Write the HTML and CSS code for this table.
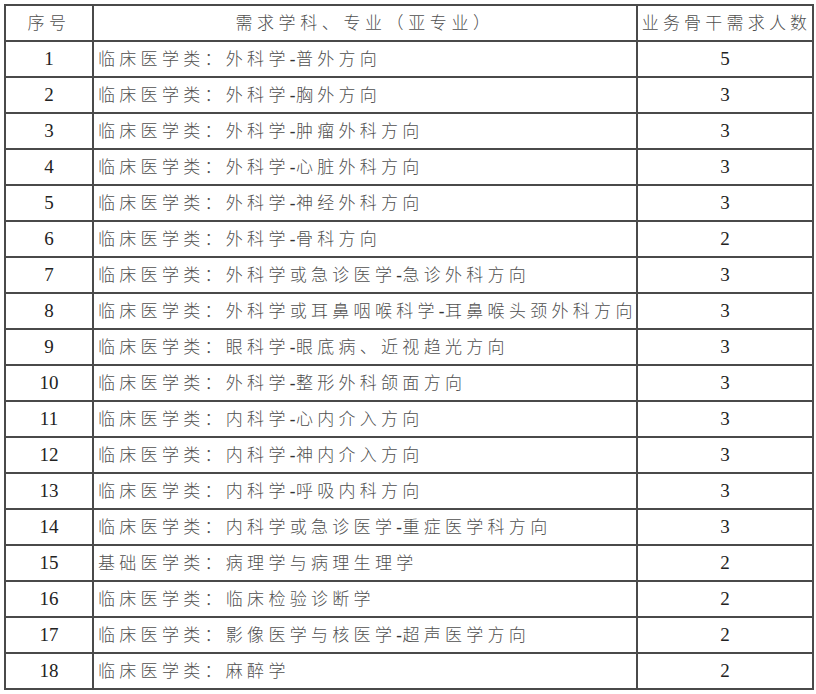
FILE: index.html
```html
<!DOCTYPE html>
<html lang="zh-CN">
<head>
<meta charset="utf-8">
<title>需求表</title>
<link rel="stylesheet" href="styles.css">
</head>
<body>
<table class="req">
<colgroup><col class="c1"><col class="c2"><col class="c3"></colgroup>
<thead>
<tr><th>序号</th><th>需求学科、专业（亚专业）</th><th class="last">业务骨干需求人数</th></tr>
</thead>
<tbody>
<tr><td class="num">1</td><td class="txt">临床医学类：外科学<span class="h">-</span>普外方向</td><td class="num">5</td></tr>
<tr><td class="num">2</td><td class="txt">临床医学类：外科学<span class="h">-</span>胸外方向</td><td class="num">3</td></tr>
<tr><td class="num">3</td><td class="txt">临床医学类：外科学<span class="h">-</span>肿瘤外科方向</td><td class="num">3</td></tr>
<tr><td class="num">4</td><td class="txt">临床医学类：外科学<span class="h">-</span>心脏外科方向</td><td class="num">3</td></tr>
<tr><td class="num">5</td><td class="txt">临床医学类：外科学<span class="h">-</span>神经外科方向</td><td class="num">3</td></tr>
<tr><td class="num">6</td><td class="txt">临床医学类：外科学<span class="h">-</span>骨科方向</td><td class="num">2</td></tr>
<tr><td class="num">7</td><td class="txt">临床医学类：外科学或急诊医学<span class="h">-</span>急诊外科方向</td><td class="num">3</td></tr>
<tr><td class="num">8</td><td class="txt">临床医学类：外科学或耳鼻咽喉科学<span class="h">-</span>耳鼻喉头颈外科方向</td><td class="num">3</td></tr>
<tr><td class="num">9</td><td class="txt">临床医学类：眼科学<span class="h">-</span>眼底病、近视趋光方向</td><td class="num">3</td></tr>
<tr><td class="num">10</td><td class="txt">临床医学类：外科学<span class="h">-</span>整形外科颌面方向</td><td class="num">3</td></tr>
<tr><td class="num">11</td><td class="txt">临床医学类：内科学<span class="h">-</span>心内介入方向</td><td class="num">3</td></tr>
<tr><td class="num">12</td><td class="txt">临床医学类：内科学<span class="h">-</span>神内介入方向</td><td class="num">3</td></tr>
<tr><td class="num">13</td><td class="txt">临床医学类：内科学<span class="h">-</span>呼吸内科方向</td><td class="num">3</td></tr>
<tr><td class="num">14</td><td class="txt">临床医学类：内科学或急诊医学<span class="h">-</span>重症医学科方向</td><td class="num">3</td></tr>
<tr><td class="num">15</td><td class="txt">基础医学类：病理学与病理生理学</td><td class="num">2</td></tr>
<tr><td class="num">16</td><td class="txt">临床医学类：临床检验诊断学</td><td class="num">2</td></tr>
<tr><td class="num">17</td><td class="txt">临床医学类：影像医学与核医学<span class="h">-</span>超声医学方向</td><td class="num">2</td></tr>
<tr><td class="num">18</td><td class="txt">临床医学类：麻醉学</td><td class="num">2</td></tr>
</tbody>
</table>
</body>
</html>
```

FILE: styles.css
```css
html, body {
  margin: 0;
  padding: 0;
  background: #ffffff;
}
body {
  padding: 4px;
}
.req {
  border-collapse: collapse;
  table-layout: fixed;
  width: 808px;
  font-family: "Liberation Serif", "Noto Sans CJK SC", serif;
  color: #333;
}
.c1 { width: 88px; }
.c2 { width: 544px; }
.c3 { width: 176px; }
.req th, .req td {
  border: 2px solid #4a4a4a;
  height: 34px;
  padding: 0;
  vertical-align: middle;
  white-space: nowrap;
  overflow: hidden;
}
.req th {
  height: 31px;
  padding-bottom: 3px;
  font-family: "Noto Sans CJK SC", sans-serif;
  font-weight: 300;
  font-size: 17px;
  letter-spacing: 4.6px;
  text-align: center;
  color: #505050;
}
.req th.last {
  letter-spacing: 4.2px;
  padding-left: 3px;
}
.req td.num {
  text-align: center;
  font-family: "Liberation Serif", serif;
  font-size: 19px;
  color: #222;
}
.req td.txt {
  height: 31px;
  padding-bottom: 3px;
  text-align: left;
  padding-left: 4px;
  font-family: "Noto Sans CJK SC", sans-serif;
  font-weight: 300;
  font-size: 17px;
  letter-spacing: 4.3px;
  color: #505050;
}
.h {
  font-family: "Liberation Serif", serif;
  font-weight: 700;
  letter-spacing: 0.5px;
  color: #333;
}
```
